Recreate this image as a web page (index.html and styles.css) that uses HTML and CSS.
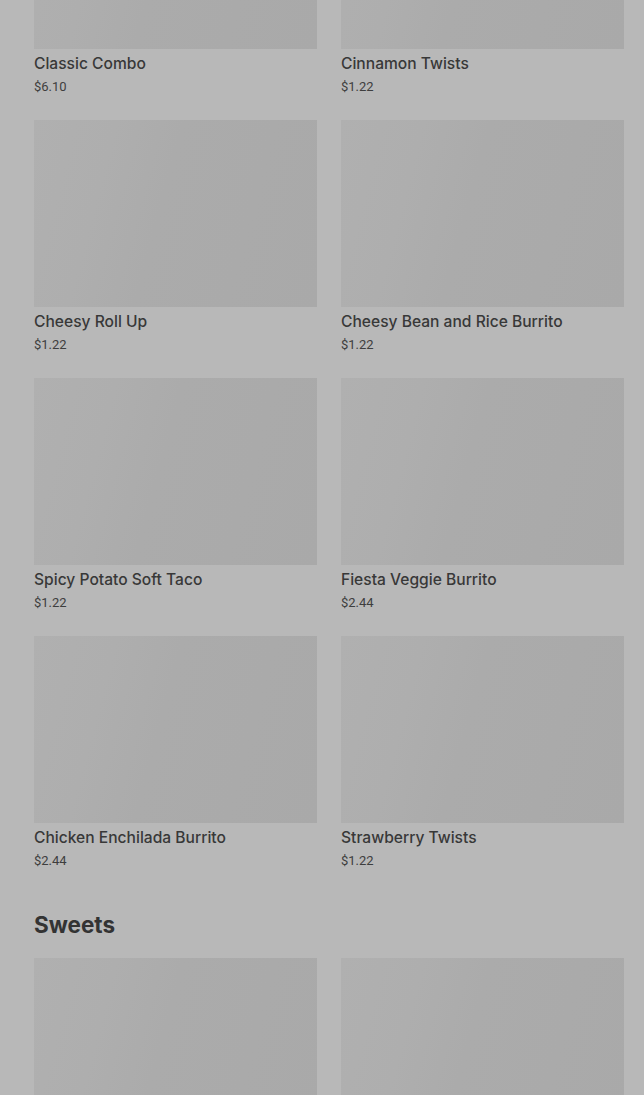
FILE: index.html
```html
<!DOCTYPE html>
<html lang="en">
<head>
    <meta charset="UTF-8">
    <meta name="viewport" content="width=device-width, initial-scale=1.0">
    <title>Menu</title>
    <link rel="stylesheet" href="styles.css">
</head>
<body>
    <div class="menu">
        <div class="section">
            <div class="grid">
                <div class="card"><div class="pic"></div><div class="name">Classic Combo</div><div class="price">$6.10</div></div>
                <div class="card"><div class="pic"></div><div class="name">Cinnamon Twists</div><div class="price">$1.22</div></div>
                <div class="card"><div class="pic"></div><div class="name">Cheesy Roll Up</div><div class="price">$1.22</div></div>
                <div class="card"><div class="pic"></div><div class="name">Cheesy Bean and Rice Burrito</div><div class="price">$1.22</div></div>
                <div class="card"><div class="pic"></div><div class="name">Spicy Potato Soft Taco</div><div class="price">$1.22</div></div>
                <div class="card"><div class="pic"></div><div class="name">Fiesta Veggie Burrito</div><div class="price">$2.44</div></div>
                <div class="card"><div class="pic"></div><div class="name">Chicken Enchilada Burrito</div><div class="price">$2.44</div></div>
                <div class="card"><div class="pic"></div><div class="name">Strawberry Twists</div><div class="price">$1.22</div></div>
            </div>
        </div>
        <div class="section">
            <h2 class="title">Sweets</h2>
            <div class="grid">
                <div class="card"><div class="pic"></div><div class="name">Cinnamon Twists</div><div class="price">$1.22</div></div>
                <div class="card"><div class="pic"></div><div class="name">Strawberry Twists</div><div class="price">$1.22</div></div>
            </div>
        </div>
    </div>
</body>
</html>
```

FILE: styles.css
```css
html, body{margin: 0; padding: 0; background: #b8b8b8; overflow: hidden;}

body{font-family: Inter, Roboto, "Liberation Sans", sans-serif; color: #363636; height: 1095px;}

.menu{margin-top: -138px; padding: 0 20px 0 34px;}

.section{margin-bottom: 41px;}

.title{margin: 0 0 19px; font-size: 22.5px; font-weight: 700; line-height: 28px; color: #333;}

.grid{display: grid; grid-template-columns: 1fr 1fr; column-gap: 24px; row-gap: 24px;}

.card{height: 234px;}

.pic{height: 187px; background: linear-gradient(105deg, #b0b0b0 0%, #aeaeae 25%, #ababab 45%, #a9a9a9 100%);}

.name{margin-top: 5px; font-size: 15.6px; font-weight: 500; line-height: 20px; color: #383838;}

.price{margin-top: 5px; font-family: Roboto, "Liberation Sans", sans-serif; font-size: 13px; line-height: 16px; color: #3e3e3e;}
```
